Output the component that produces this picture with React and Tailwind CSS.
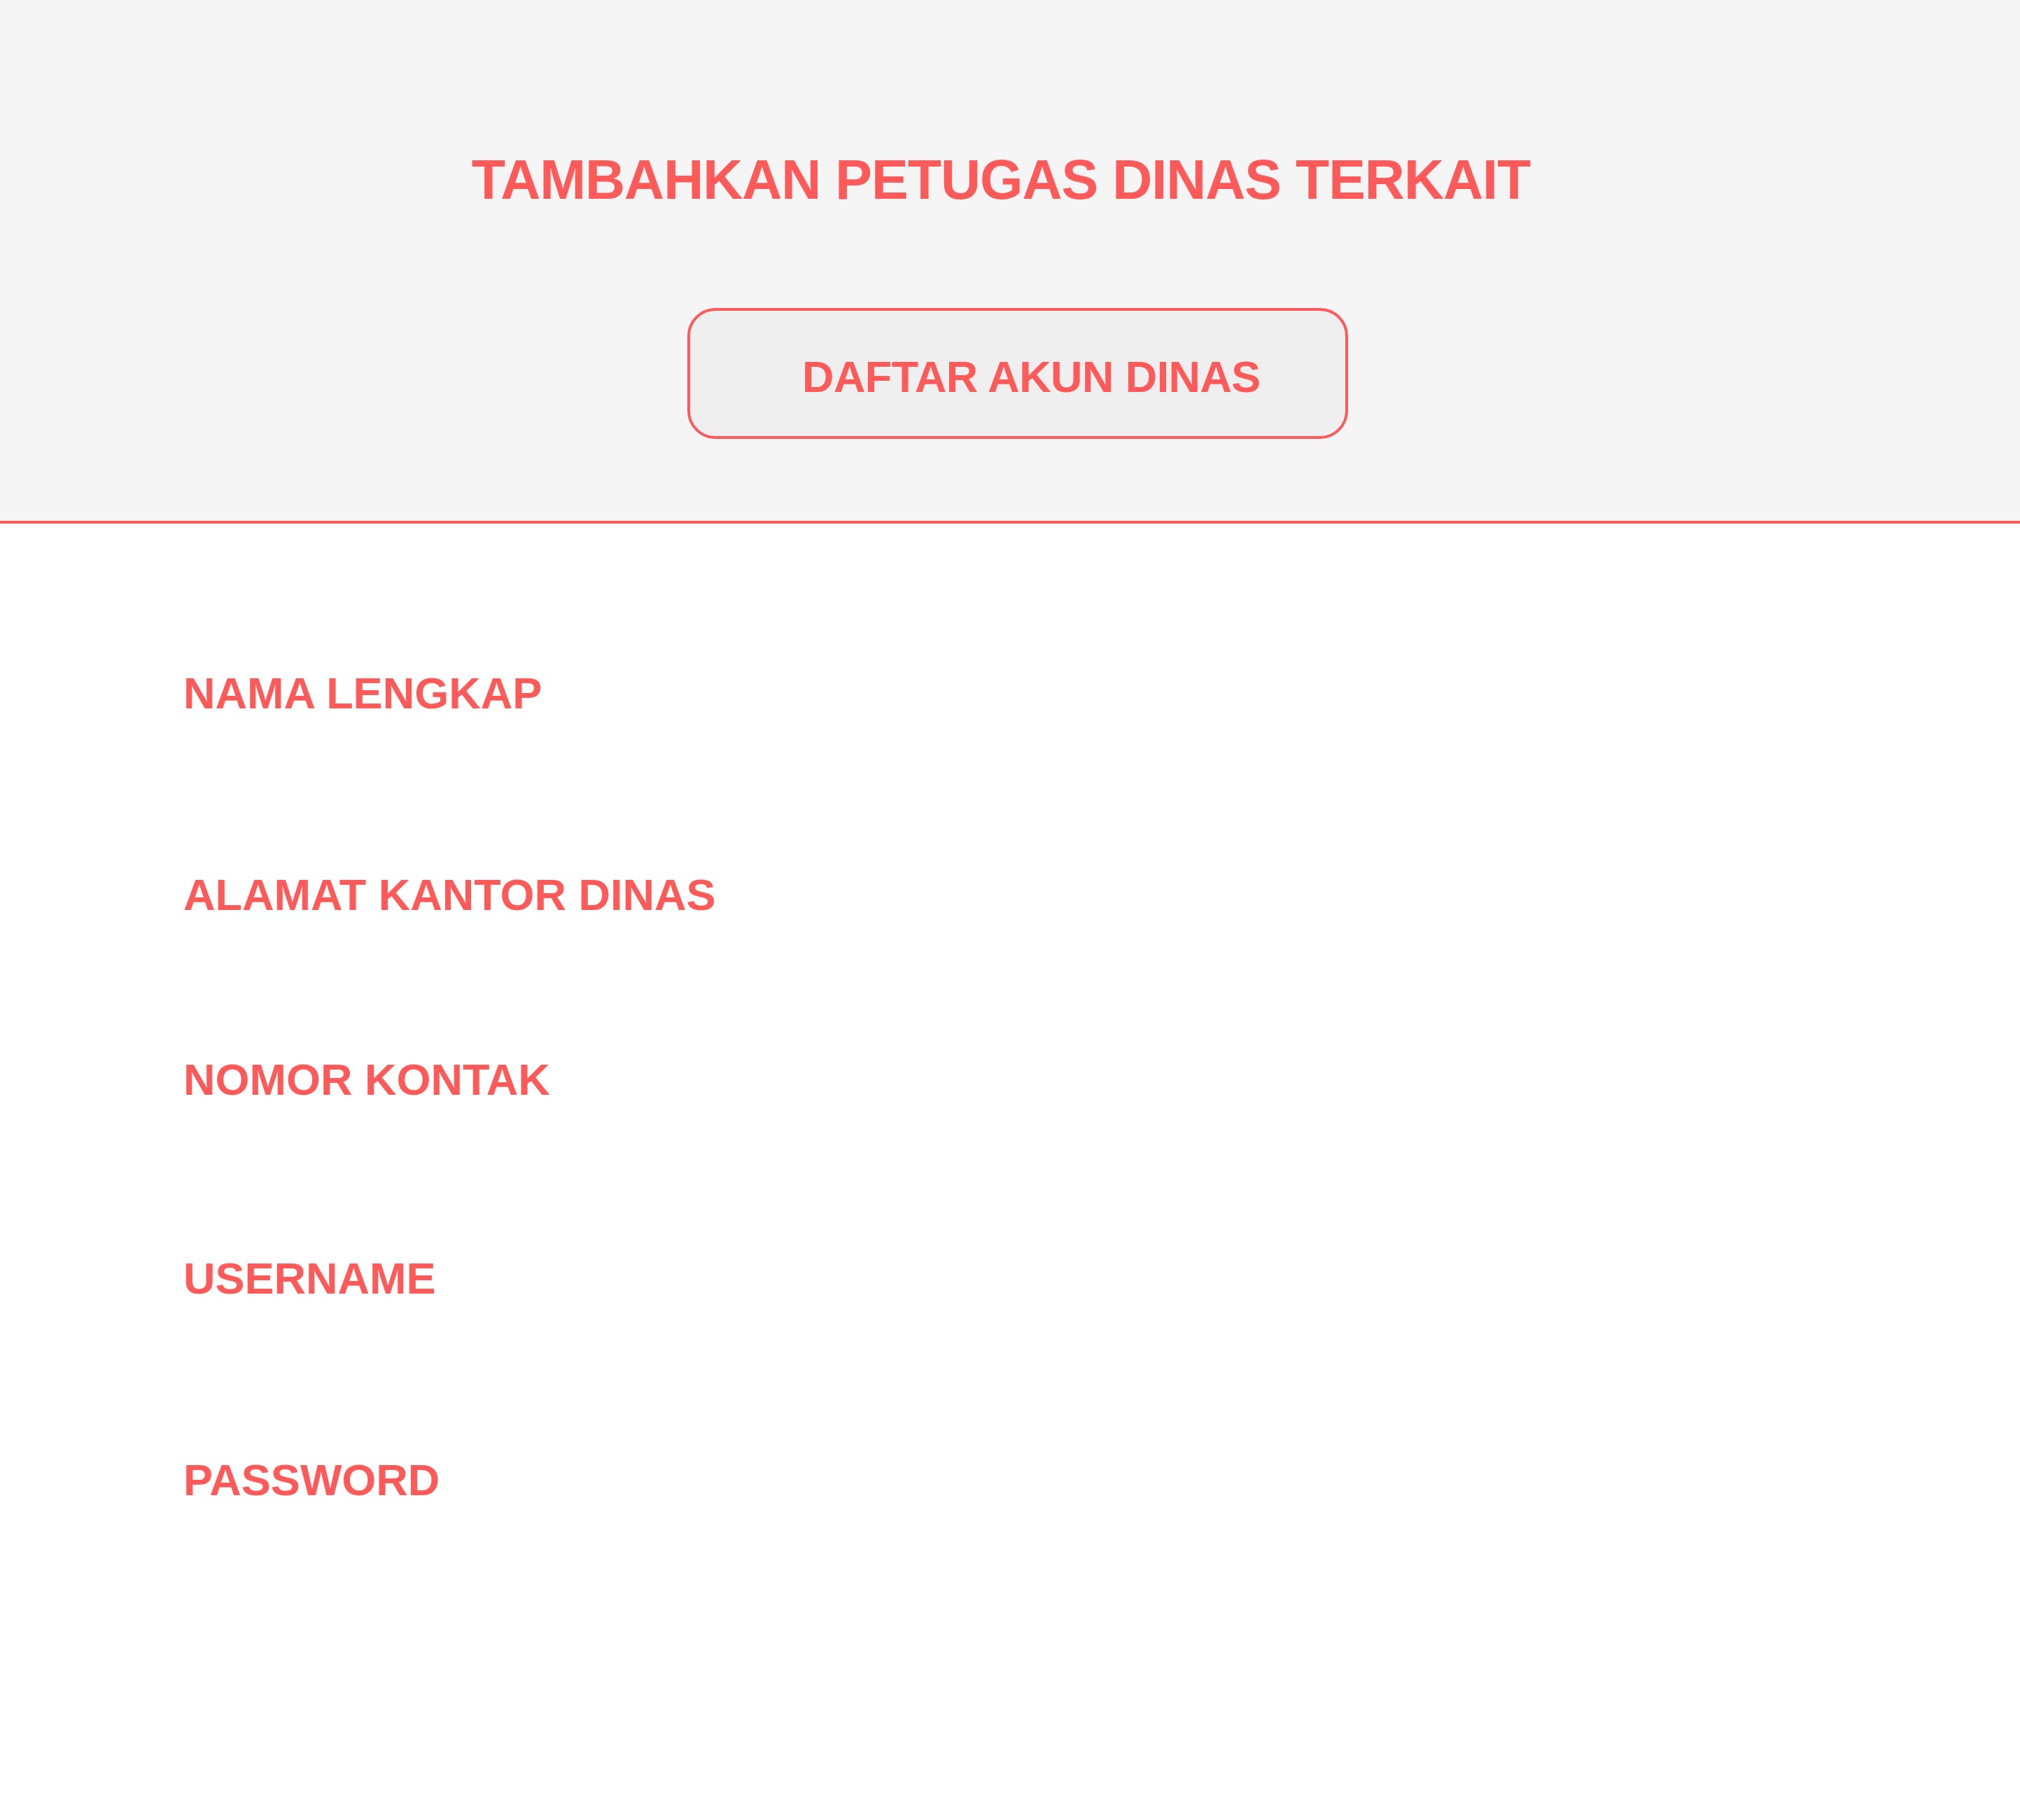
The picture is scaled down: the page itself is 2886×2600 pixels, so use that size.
const fields = [
  { label: "NAMA LENGKAP", gap: "mt-[211px]" },
  { label: "ALAMAT KANTOR DINAS", gap: "mt-[225px]" },
  { label: "NOMOR KONTAK", gap: "mt-[201px]" },
  { label: "USERNAME", gap: "mt-[221px]" },
  { label: "PASSWORD", gap: "mt-[225px]" },
];

const App = () => {
  return (
    <div className="min-h-[2600px] w-full bg-white font-['Liberation_Sans',Arial,sans-serif] font-bold text-[#ff5a5a]">
      {/* header */}
      <div className="flex flex-col items-center bg-[#f5f5f5] pt-[217px] pb-[117px] border-b-4 border-[#ff5a5a]">
        <h1 className="mr-[26px] text-[79px] leading-none tracking-[-1px]">
          TAMBAHKAN PETUGAS DINAS TERKAIT
        </h1>
        <button className="ml-[22px] mt-[144px] w-[944px] rounded-[40px] border-4 border-[#ff5a5a] bg-[#efefef] pl-[160px] pt-[63px] pb-[53px] text-left">
          <span className="block text-[63px] leading-none tracking-[-0.6px]">
            DAFTAR AKUN DINAS
          </span>
        </button>
      </div>

      {/* form */}
      <div className="flex flex-col pl-[262px]">
        {fields.map((f, i) => (
          <label key={i} className={`${f.gap} text-[63px] leading-none`}>
            {f.label}
          </label>
        ))}
      </div>
    </div>
  );
};

export default App;
